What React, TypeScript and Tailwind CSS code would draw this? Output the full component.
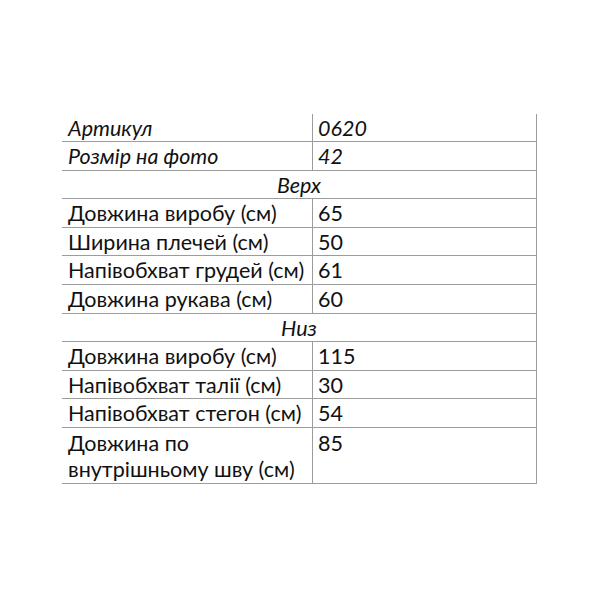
import React from "react";

type Row =
  | { kind: "pair"; label: string; value: string; italic?: boolean }
  | { kind: "section"; label: string }
  | { kind: "double"; l1: string; l2: string; value: string };

const rows: Row[] = [
  { kind: "pair", label: "Артикул", value: "0620", italic: true },
  { kind: "pair", label: "Розмір на фото", value: "42", italic: true },
  { kind: "section", label: "Верх" },
  { kind: "pair", label: "Довжина виробу (см)", value: "65" },
  { kind: "pair", label: "Ширина плечей (см)", value: "50" },
  { kind: "pair", label: "Напівобхват грудей (см)", value: "61" },
  { kind: "pair", label: "Довжина рукава (см)", value: "60" },
  { kind: "section", label: "Низ" },
  { kind: "pair", label: "Довжина виробу (см)", value: "115" },
  { kind: "pair", label: "Напівобхват талії (см)", value: "30" },
  { kind: "pair", label: "Напівобхват стегон (см)", value: "54" },
  { kind: "double", l1: "Довжина по", l2: "внутрішньому шву (см)", value: "85" },
];

export default function App() {
  return (
    <div className="w-[600px] h-[600px] bg-white pt-[113.5px] pl-[62px]">
      <div
        className="w-[475px] text-[#111111] text-[21.5px]"
        style={{ fontFamily: "Lato, 'Noto Sans', sans-serif" }}
      >
        {rows.map((r, i) => {
          if (r.kind === "section") {
            return (
              <div
                key={i}
                className="h-[28.6px] border-b border-r border-[#9c9c9c] leading-[28.6px] text-center italic"
              >
                {r.label}
              </div>
            );
          }
          if (r.kind === "double") {
            return (
              <div key={i} className="flex h-[56px] border-b border-r border-[#9c9c9c]">
                <div className="w-[251px] border-r border-[#9c9c9c] pl-[6px] pt-[2px] leading-[26px]">
                  <div>{r.l1}</div>
                  <div>{r.l2}</div>
                </div>
                <div className="flex-1 pl-[5px] pt-[2px] leading-[26px]">{r.value}</div>
              </div>
            );
          }
          return (
            <div
              key={i}
              className={`flex h-[28.6px] border-b border-r border-[#9c9c9c] leading-[28.6px] ${r.italic ? "italic" : ""}`}
            >
              <div className="w-[251px] border-r border-[#9c9c9c] pl-[6px]">{r.label}</div>
              <div className="flex-1 pl-[5px]">{r.value}</div>
            </div>
          );
        })}
      </div>
    </div>
  );
}
